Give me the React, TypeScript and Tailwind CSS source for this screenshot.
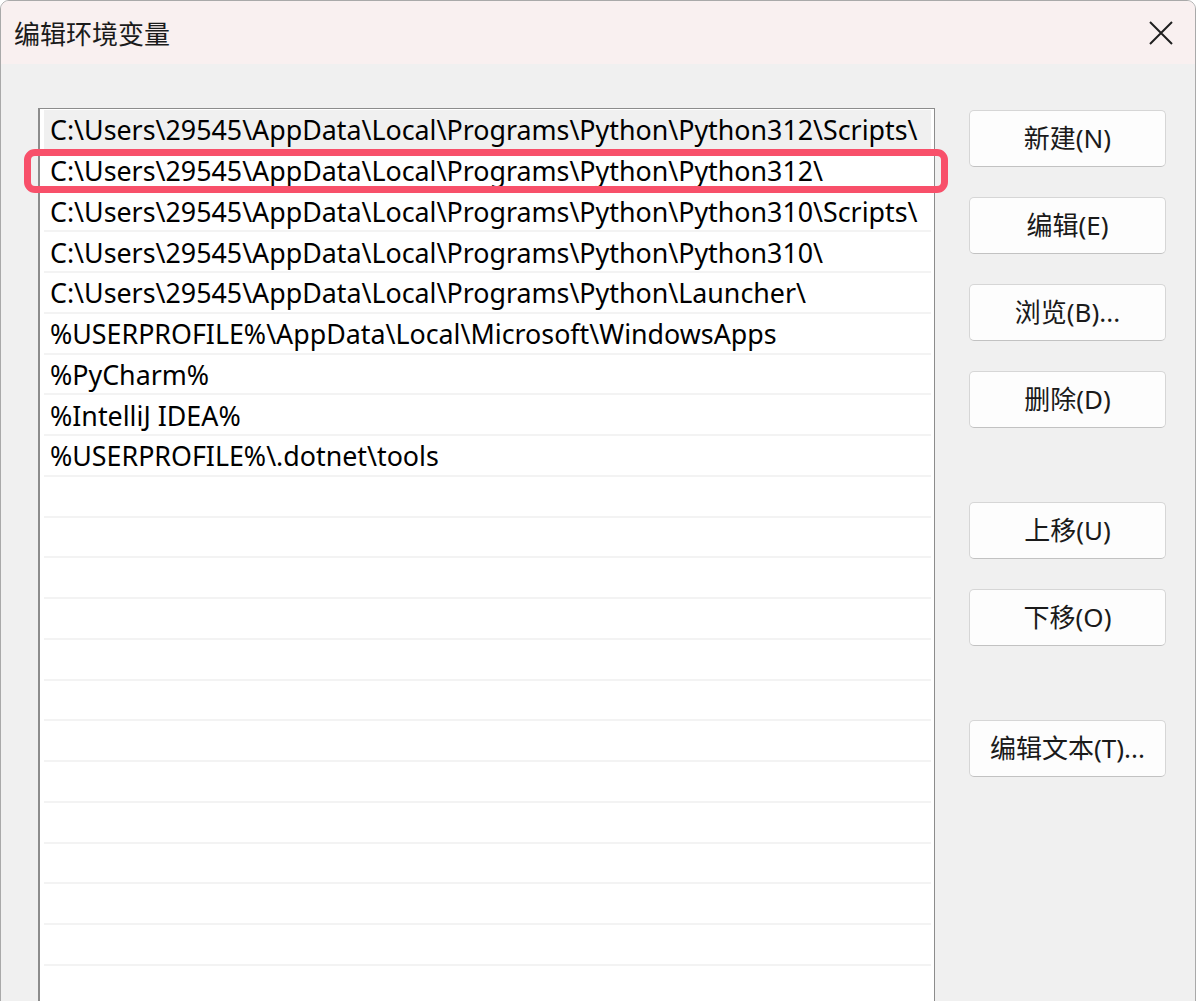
import React from "react";

const paths = [
  "C:\\Users\\29545\\AppData\\Local\\Programs\\Python\\Python312\\Scripts\\",
  "C:\\Users\\29545\\AppData\\Local\\Programs\\Python\\Python312\\",
  "C:\\Users\\29545\\AppData\\Local\\Programs\\Python\\Python310\\Scripts\\",
  "C:\\Users\\29545\\AppData\\Local\\Programs\\Python\\Python310\\",
  "C:\\Users\\29545\\AppData\\Local\\Programs\\Python\\Launcher\\",
  "%USERPROFILE%\\AppData\\Local\\Microsoft\\WindowsApps",
  "%PyCharm%",
  "%IntelliJ IDEA%",
  "%USERPROFILE%\\.dotnet\\tools",
];

const rows = [...paths, ...Array(14).fill("")];

const font = { fontFamily: '"Noto Sans", "Noto Sans CJK SC", sans-serif' };

const Btn = ({ label }: { label: string }) => (
  <button className="h-[57px] w-[197px] rounded-[5px] border border-[#d6d6d6] border-b-[#c2c2c2] bg-[#fdfdfd] text-[26px] text-[#1a1a1a]">
    {label}
  </button>
);

const App = () => {
  return (
    <div className="h-[1001px] w-[1196px] overflow-hidden bg-white" style={font}>
      <div className="flex h-[1010px] flex-col overflow-hidden rounded-t-[9px] border border-[#a9a9a9] bg-[#f0f0f0]">
        {/* title bar */}
        <div className="flex h-[63px] shrink-0 items-center justify-between bg-[#f9f0f0] pl-[13px] pr-[22px]">
          <span className="text-[26px] text-[#1b1b1b]" style={{ fontFamily: '"Noto Sans CJK SC", sans-serif' }}>
            编辑环境变量
          </span>
          <svg width="24" height="24" viewBox="0 0 24 24" className="text-[#1f1f1f]">
            <path d="M1 1 L23 23 M23 1 L1 23" stroke="currentColor" strokeWidth="2" fill="none" />
          </svg>
        </div>

        {/* body */}
        <div className="flex pl-[37px] pt-[44px]">
          <div className="relative">
            <div className="h-[900px] w-[897px] border border-[#8c8c8c] border-l-2 bg-white pl-[4px] pr-[3px] pt-[1px]">
              {rows.map((p, i) => (
                <div
                  key={i}
                  className={`flex h-[40.75px] items-center whitespace-nowrap border-b-2 border-[#f3f3f3] pl-[6px] pt-[3px] text-[26.8px] leading-none text-black ${
                    i === 0 ? "bg-[#f0f0f0]" : ""
                  }`}
                >
                  {p}
                </div>
              ))}
            </div>
            {/* highlight */}
            <div className="absolute left-[-14px] top-[41px] h-[44px] w-[924px] rounded-[11px] border-[7px] border-[#f8506a]" />
          </div>

          <div className="ml-[34px] mt-[2px] flex flex-col">
            <div className="flex flex-col gap-[30px]">
              <Btn label="新建(N)" />
              <Btn label="编辑(E)" />
              <Btn label="浏览(B)..." />
              <Btn label="删除(D)" />
            </div>
            <div className="mt-[74px] flex flex-col gap-[30px]">
              <Btn label="上移(U)" />
              <Btn label="下移(O)" />
            </div>
            <div className="mt-[74px]">
              <Btn label="编辑文本(T)..." />
            </div>
          </div>
        </div>
      </div>
    </div>
  );
};

export default App;
